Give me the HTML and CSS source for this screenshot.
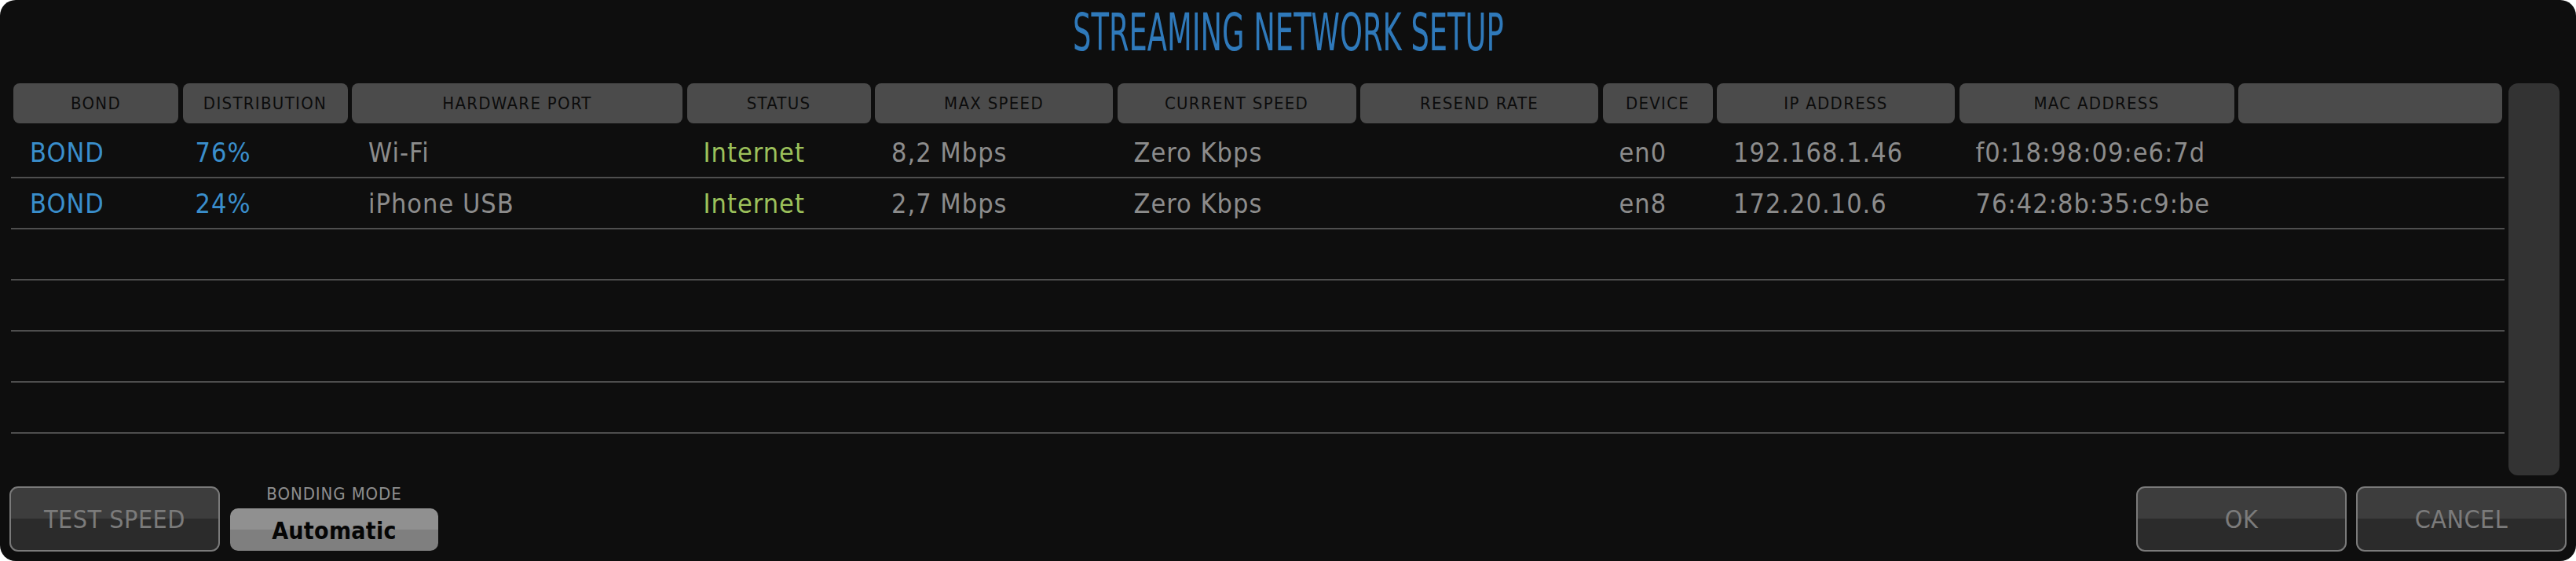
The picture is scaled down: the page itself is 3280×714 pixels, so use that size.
FILE: index.html
```html
<!DOCTYPE html>
<html>
<head>
<meta charset="utf-8">
<link rel="stylesheet" href="styles.css">
</head>
<body>
<div class="window">
  <h1 class="title"><span class="title-text">STREAMING NETWORK SETUP</span></h1>
  <div class="main">
    <div class="table">
      <div class="grid head">
        <div class="th">BOND</div>
        <div class="th">DISTRIBUTION</div>
        <div class="th">HARDWARE PORT</div>
        <div class="th">STATUS</div>
        <div class="th">MAX SPEED</div>
        <div class="th">CURRENT SPEED</div>
        <div class="th">RESEND RATE</div>
        <div class="th">DEVICE</div>
        <div class="th">IP ADDRESS</div>
        <div class="th">MAC ADDRESS</div>
        <div class="th"></div>
      </div>
      <div class="grid row">
        <div class="td blue">BOND</div>
        <div class="td blue dist">76%</div>
        <div class="td">Wi-Fi</div>
        <div class="td green">Internet</div>
        <div class="td">8,2 Mbps</div>
        <div class="td">Zero Kbps</div>
        <div class="td"></div>
        <div class="td">en0</div>
        <div class="td">192.168.1.46</div>
        <div class="td">f0:18:98:09:e6:7d</div>
        <div class="td"></div>
      </div>
      <div class="grid row">
        <div class="td blue">BOND</div>
        <div class="td blue dist">24%</div>
        <div class="td">iPhone USB</div>
        <div class="td green">Internet</div>
        <div class="td">2,7 Mbps</div>
        <div class="td">Zero Kbps</div>
        <div class="td"></div>
        <div class="td">en8</div>
        <div class="td">172.20.10.6</div>
        <div class="td">76:42:8b:35:c9:be</div>
        <div class="td"></div>
      </div>
      <div class="grid row"></div>
      <div class="grid row"></div>
      <div class="grid row"></div>
      <div class="grid row"></div>
    </div>
    <div class="scrollbar"></div>
  </div>
  <div class="footer">
    <div class="left">
      <button class="btn">TEST SPEED</button>
      <div class="mode">
        <div class="mode-label">BONDING MODE</div>
        <button class="select">Automatic</button>
      </div>
    </div>
    <div class="right">
      <button class="btn">OK</button>
      <button class="btn">CANCEL</button>
    </div>
  </div>
</div>
</body>
</html>
```

FILE: styles.css
```css
* { box-sizing: border-box; }
html, body {
  margin: 0;
  padding: 0;
  background: #ffffff;
}
body {
  width: 3280px;
  height: 714px;
  overflow: hidden;
  font-family: "DejaVu Sans Condensed", "DejaVu Sans", sans-serif;
}
.window {
  width: 3280px;
  height: 714px;
  background: #0e0e0e;
  border-radius: 20px;
  padding-bottom: 12px;
  display: flex;
  flex-direction: column;
}
.title {
  margin: 0;
  height: 106px;
  padding-top: 4px;
  line-height: 76px;
  font-size: 66px;
  font-weight: normal;
  text-align: center;
  color: #2f79ba;
}
.title-text {
  display: inline-block;
  transform: scaleX(0.62);
  transform-origin: center;
}
.main {
  height: 499px;
  display: flex;
  gap: 5px;
  padding-left: 14px;
  padding-right: 21px;
}
.table {
  flex: 1;
  display: flex;
  flex-direction: column;
}
.grid {
  display: grid;
  grid-template-columns: 210px 210px 421px 234px 303px 304px 303px 140px 303px 350px 1fr;
  column-gap: 5.5px;
  padding: 0 3px;
}
.head {
  height: 51px;
  margin-bottom: 5px;
}
.th {
  background: #4b4b4b;
  border-radius: 8px;
  color: #0c0c0c;
  font-size: 22px;
  letter-spacing: 1.3px;
  line-height: 51px;
  text-align: center;
  white-space: nowrap;
}
.row {
  height: 65px;
  border-bottom: 2px solid #4e4e4e;
}
.td {
  font-size: 34px;
  letter-spacing: 1px;
  line-height: 63px;
  padding-top: 1px;
  padding-left: 21px;
  color: #8c8c8c;
  white-space: nowrap;
}
.td.dist { padding-left: 16px; }
.blue { color: #3a8ecc; }
.green { color: #9cc15b; }
.scrollbar {
  width: 65px;
  background: #333333;
  border-radius: 12px;
}
.footer {
  margin-top: 14px;
  padding: 0 12px;
  display: flex;
  justify-content: space-between;
  align-items: flex-start;
}
.left, .right {
  display: flex;
  align-items: flex-start;
  gap: 12px;
}
.left { gap: 13px; }
.btn {
  width: 268px;
  height: 83px;
  border: 2px solid #7a7a7a;
  border-radius: 11px;
  background: linear-gradient(#3d3d3d 50%, #2b2b2b 50%);
  color: #7b7b7b;
  font-family: "DejaVu Sans Condensed", "DejaVu Sans", sans-serif;
  font-size: 32px;
  letter-spacing: 0.5px;
  padding: 0;
  margin: 0;
}
.mode {
  display: flex;
  flex-direction: column;
  align-items: center;
  width: 265px;
}
.mode-label {
  font-size: 22px;
  line-height: 20px;
  letter-spacing: 0.9px;
  color: #8e8e8e;
  white-space: nowrap;
}
.select {
  margin-top: 8px;
  width: 265px;
  height: 54px;
  border: none;
  border-radius: 10px;
  background: linear-gradient(#909090 50%, #7f7f7f 50%);
  color: #050505;
  font-family: "DejaVu Sans Condensed", "DejaVu Sans", sans-serif;
  font-size: 30px;
  font-weight: bold;
  letter-spacing: 0.3px;
  padding: 3px 0 0 0;
}
```
